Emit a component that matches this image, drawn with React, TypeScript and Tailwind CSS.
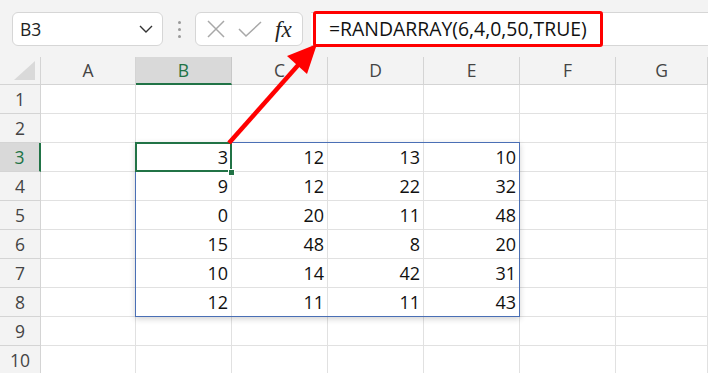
import React from "react";

const cols = ["A", "B", "C", "D", "E", "F", "G"];
const data: (number | null)[][] = [
  [3, 12, 13, 10],
  [9, 12, 22, 32],
  [0, 20, 11, 48],
  [15, 48, 8, 20],
  [10, 14, 42, 31],
  [12, 11, 11, 43],
];

function cellValue(r: number, c: number): number | null {
  if (r >= 3 && r <= 8 && c >= 1 && c <= 4) return data[r - 3][c - 1] as number;
  return null;
}

export default function App() {
  const rows = Array.from({ length: 10 }, (_, i) => i + 1);
  return (
    <div
      className="relative w-[708px] h-[373px] overflow-hidden bg-white"
      style={{ fontFamily: "'Open Sans', 'Noto Sans', sans-serif" }}
    >
      {/* Toolbar */}
      <div className="h-[57px] bg-[#f3f3f3] flex items-start pt-[12px]">
        <div className="ml-[12px] w-[151px] h-[34px] bg-white border border-[#d6d6d6] rounded-[6px] flex items-center justify-between pl-[7px] pr-[9px]">
          <span className="text-[17.5px] text-[#222]">B3</span>
          <svg width="14" height="8" viewBox="0 0 14 8">
            <path d="M1 1 L7 7 L13 1" fill="none" stroke="#333" strokeWidth="1.4" />
          </svg>
        </div>
        <div className="w-[32px] h-[34px] flex flex-col items-center justify-center gap-[4px]">
          <div className="w-[3px] h-[3px] rounded-full bg-[#9a9a9a]" />
          <div className="w-[3px] h-[3px] rounded-full bg-[#9a9a9a]" />
          <div className="w-[3px] h-[3px] rounded-full bg-[#9a9a9a]" />
        </div>
        <div className="w-[108px] h-[34px] bg-white border border-[#d6d6d6] rounded-[6px] flex items-center pl-[10px]">
          <svg width="20" height="20" viewBox="0 0 20 20">
            <path d="M2 2 L18 18 M18 2 L2 18" stroke="#a8a8a8" strokeWidth="1.5" fill="none" />
          </svg>
          <svg width="24" height="20" viewBox="0 0 24 20" className="ml-[12px]">
            <path d="M1 10 L8 17 L23 3" stroke="#a8a8a8" strokeWidth="1.5" fill="none" />
          </svg>
          <span
            className="ml-[13px] text-[23px] italic text-[#222] leading-none"
            style={{ fontFamily: "'Liberation Serif', 'DejaVu Serif', serif" }}
          >
            fx
          </span>
        </div>
        <div className="ml-[8px] flex-1 h-[34px] bg-white border-y border-[#d6d6d6] flex items-center">
          <div className="ml-[2px] -mt-[1px] w-[290px] h-[36px] border-[3px] border-[#ff0000] rounded-[3px] flex items-center pl-[13px]">
            <span className="text-[19.4px] text-[#111] whitespace-nowrap">
              =RANDARRAY(6,4,0,50,TRUE)
            </span>
          </div>
        </div>
      </div>

      {/* Grid */}
      <div className="relative">
        <div className="grid grid-cols-[41px_95px_96px_96px_96px_96px_96px_1fr] grid-rows-[28px_repeat(10,29px)]">
          <div className="bg-[#f3f3f3] border-r border-b border-[#d4d4d4] relative">
            <svg width="22" height="20" viewBox="0 0 22 20" className="absolute right-[4px] bottom-[3px]">
              <path d="M21 0 L21 19 L0 19 Z" fill="#d9d9d9" />
            </svg>
          </div>
          {cols.map((c) => (
            <div
              key={c}
              className={
                c === "B"
                  ? "bg-[#d9d9d9] border-r border-[#c8c8c8] border-b-2 border-b-[#217346] flex items-center justify-center text-[17.5px] text-[#217346]"
                  : "bg-[#f3f3f3] border-r border-b border-[#d4d4d4] flex items-center justify-center text-[17.5px] text-[#444]"
              }
            >
              {c}
            </div>
          ))}
          {rows.map((r) => (
            <React.Fragment key={r}>
              <div
                className={
                  r === 3
                    ? "bg-[#d9d9d9] border-r-2 border-r-[#217346] border-b border-[#d4d4d4] flex items-center justify-center text-[17.5px] text-[#217346]"
                    : "bg-[#f3f3f3] border-r border-b border-[#d4d4d4] flex items-center justify-center text-[17.5px] text-[#444]"
                }
              >
                {r}
              </div>
              {cols.map((c, ci) => {
                const v = cellValue(r, ci);
                return (
                  <div
                    key={c}
                    className="border-r border-b border-[#e1e1e1] flex items-end justify-end pr-[3px] pb-[1px] text-[18px] text-[#111] leading-[26px]"
                  >
                    {v !== null ? v : ""}
                  </div>
                );
              })}
            </React.Fragment>
          ))}
        </div>

        <div className="absolute left-[135px] top-[85px] w-[385px] h-[175px] border border-[#4a6fb5] shadow-[0_2px_6px_rgba(0,0,0,0.18)] pointer-events-none" />
        <div className="absolute left-[135px] top-[85px] w-[97px] h-[30px] border-2 border-[#217346] pointer-events-none" />
        <div className="absolute left-[228px] top-[112px] w-[7px] h-[7px] bg-[#217346] border border-white pointer-events-none" />
      </div>

      <svg className="absolute left-0 top-0 pointer-events-none" width="708" height="373" viewBox="0 0 708 373">
        <line x1="229" y1="143" x2="300" y2="63" stroke="#ff0000" strokeWidth="4.5" />
        <polygon points="317,44 287,56 307,74" fill="#ff0000" />
      </svg>
    </div>
  );
}
